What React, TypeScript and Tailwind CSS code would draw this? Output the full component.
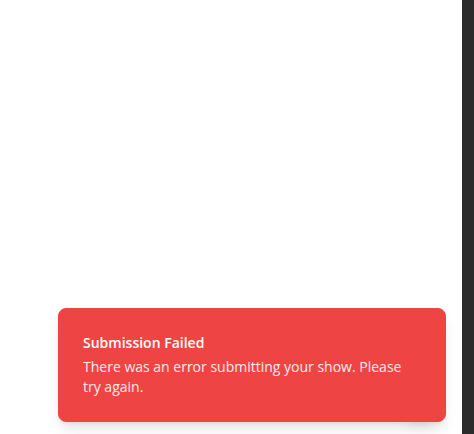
export default function App() {
  return (
    <div
      className="relative flex h-[434px] w-[474px] overflow-hidden bg-white"
      style={{ fontFamily: '"Open Sans", "Noto Sans", sans-serif' }}
    >
      <main className="relative flex-1 bg-white">
        {/* floating button hidden behind the toast */}
        <div className="absolute bottom-[16px] right-[24px] h-[36px] w-[36px] rounded-full bg-white shadow-lg" />
      </main>
      <div className="w-[12px] bg-[#2b2b2b]" />

      {/* TOAST */}
      <div className="absolute bottom-[12px] right-[28px] w-[388px] rounded-lg border border-[#ef4444] bg-[#ef4444] p-6 pr-8 text-white shadow-lg">
        <div className="grid gap-1">
          <div className="text-sm font-semibold leading-5">Submission Failed</div>
          <div className="text-sm leading-5 opacity-90">
            There was an error submitting your show. Please try again.
          </div>
        </div>
      </div>
    </div>
  );
}
